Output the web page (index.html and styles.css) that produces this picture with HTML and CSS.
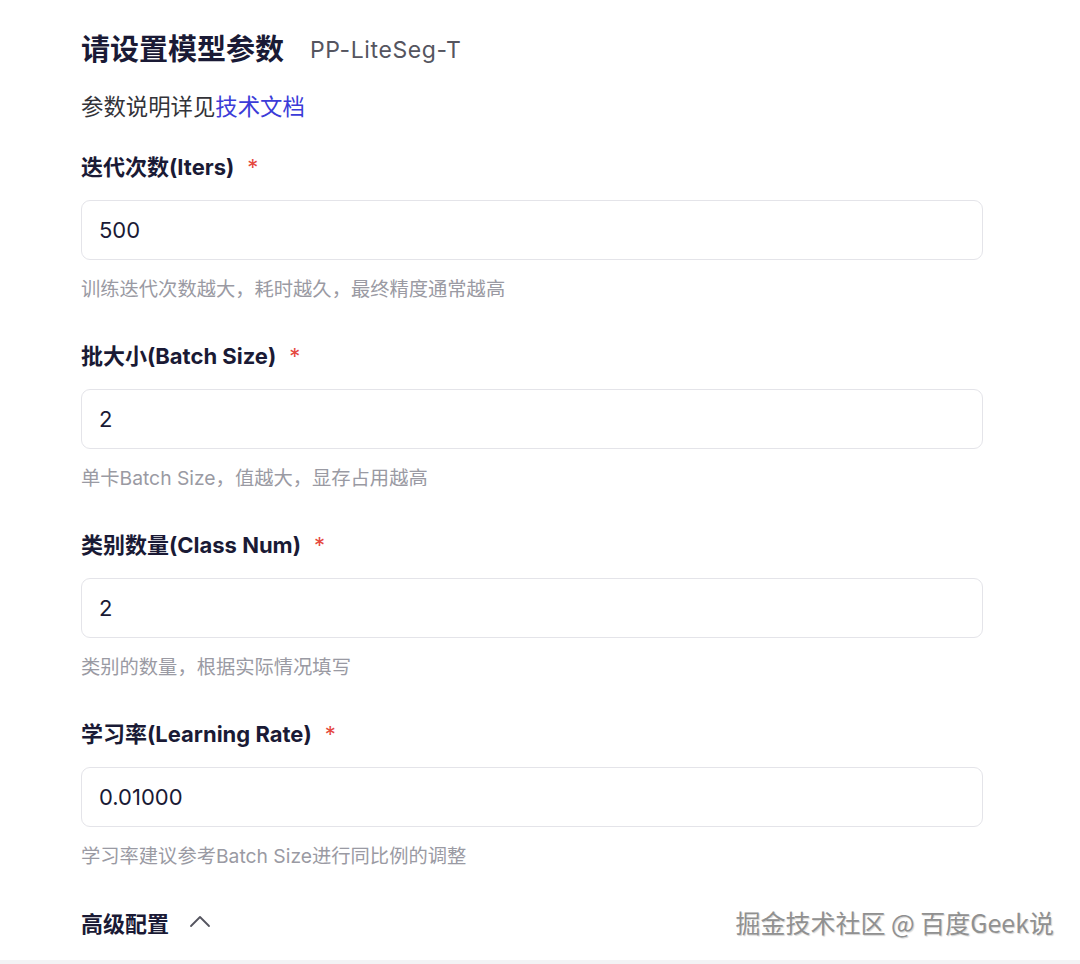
FILE: index.html
```html
<!DOCTYPE html>
<html lang="zh-CN">
<head>
    <meta charset="UTF-8">
    <meta name="viewport" content="width=device-width, initial-scale=1.0">
    <title>请设置模型参数</title>
    <link rel="stylesheet" href="styles.css">
</head>
<body>
    <div class="page">
        <div class="form-header">
            <h1>请设置模型参数</h1>
            <span class="model-name">PP-LiteSeg-T</span>
        </div>
        <p class="doc-note">参数说明详见<a href="#" class="doc-link">技术文档</a></p>

        <div class="field">
            <label class="field-label">迭代次数(Iters)<span class="required">*</span></label>
            <input type="text" class="field-input" value="500">
            <div class="field-help">训练迭代次数越大，耗时越久，最终精度通常越高</div>
        </div>

        <div class="field">
            <label class="field-label">批大小(Batch Size)<span class="required">*</span></label>
            <input type="text" class="field-input" value="2">
            <div class="field-help">单卡Batch Size，值越大，显存占用越高</div>
        </div>

        <div class="field">
            <label class="field-label">类别数量(Class Num)<span class="required">*</span></label>
            <input type="text" class="field-input" value="2">
            <div class="field-help">类别的数量，根据实际情况填写</div>
        </div>

        <div class="field">
            <label class="field-label">学习率(Learning Rate)<span class="required">*</span></label>
            <input type="text" class="field-input" value="0.01000">
            <div class="field-help">学习率建议参考Batch Size进行同比例的调整</div>
        </div>

        <div class="advanced">
            <span>高级配置</span>
            <svg class="chevron" width="22" height="14" viewBox="0 0 22 14" fill="none">
                <path d="M2 12 L11 3 L20 12" stroke="#55555f" stroke-width="1.8" stroke-linecap="round" stroke-linejoin="round"/>
            </svg>
        </div>
    </div>
    <div class="bottom-bar"></div>
    <div class="watermark">掘金技术社区 @ 百度Geek说</div>
</body>
</html>
```
FILE: styles.css
```css
body {
    margin: 0;
    background-color: #ffffff;
    font-family: "Inter", "Noto Sans CJK SC", sans-serif;
    color: #1c1c36;
    position: relative;
    height: 964px;
    overflow: hidden;
}
.page { padding: 30px 97px 0 81px; }

.form-header { display: flex; align-items: center; gap: 26px; height: 40px; }
.form-header h1 { margin: 0; font-size: 29px; font-weight: 700; line-height: 40px; color: #1a1a35; }
.model-name { font-size: 23px; color: #55555f; letter-spacing: 0.6px; }

.doc-note { margin: 22px 0 0; font-size: 22.4px; line-height: 30px; color: #333338; }
.doc-link { color: #3b3bd8; text-decoration: none; }

.field { margin-top: 30px; }
.field + .field { margin-top: 38px; }
.field-label { display: block; font-size: 22px; font-weight: 700; line-height: 30px; color: #1a1a35; }
.required { color: #e5483e; font-weight: 400; margin-left: 13px; font-size: 22px; }
.field-input {
    display: block;
    box-sizing: border-box;
    width: 902px;
    height: 60px;
    margin-top: 18px;
    padding: 0 17px;
    border: 1px solid #e4e4e9;
    border-radius: 9px;
    background-color: #ffffff;
    font-family: "Inter", "Noto Sans CJK SC", sans-serif;
    font-size: 22px;
    color: #1a1a35;
    outline: none;
}
.field-help { margin-top: 15px; font-size: 19.3px; line-height: 28px; color: #9a9aa3; }

.advanced { display: flex; align-items: center; gap: 20px; margin-top: 37px; height: 30px; font-size: 22px; font-weight: 700; color: #1a1a35; }
.chevron { margin-top: -2px; }

.bottom-bar { position: absolute; left: 0; right: 0; bottom: 0; height: 4px; background-color: #f3f3f5; }
.watermark {
    position: absolute;
    right: 26px;
    top: 906px;
    font-family: "Noto Sans CJK SC", sans-serif;
    font-size: 25px;
    font-weight: 400;
    line-height: 32px;
    color: #909090;
    text-shadow: -1px -1px 0 #ffffff, 1px 1px 1px rgba(0,0,0,0.18);
}
```
